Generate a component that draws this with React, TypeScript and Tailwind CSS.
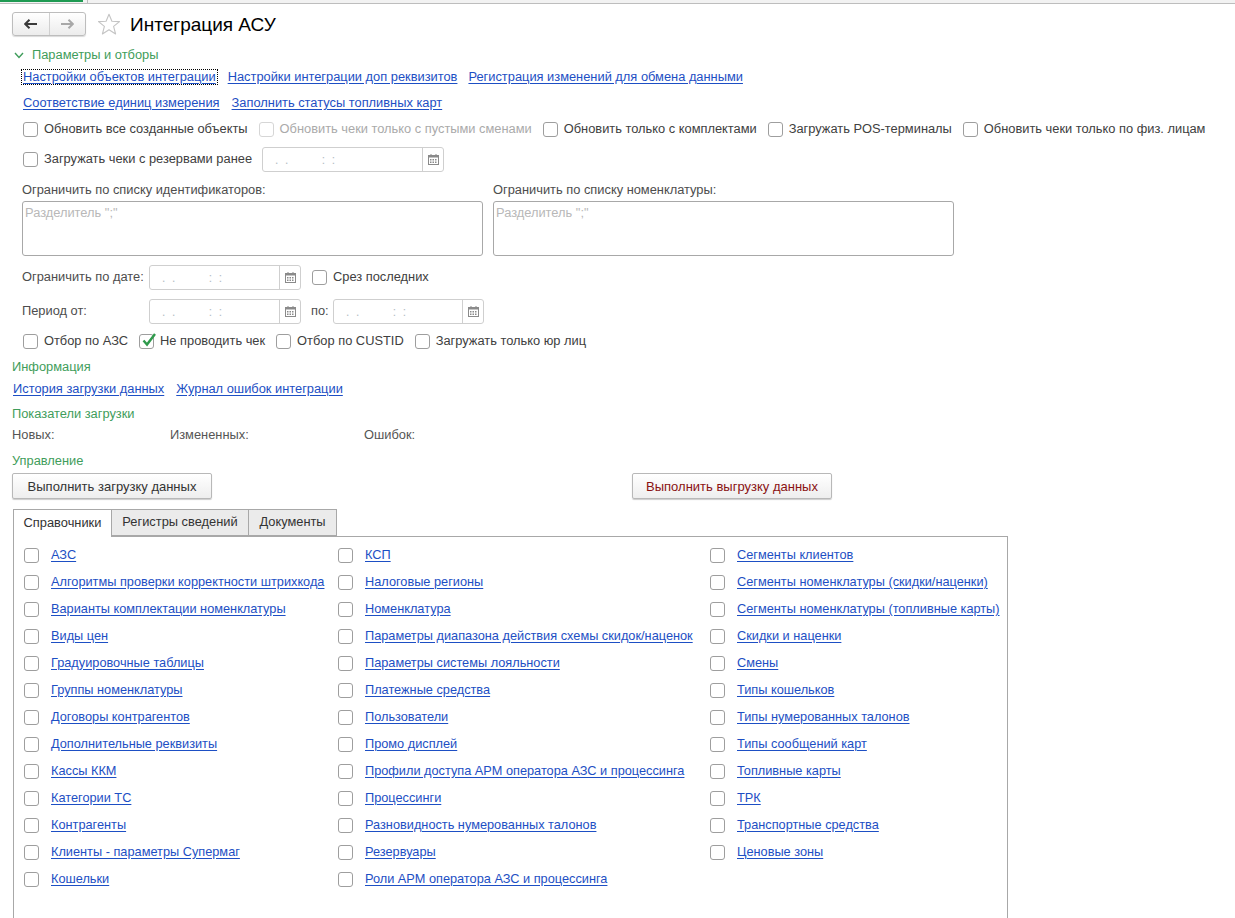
import React from "react";

const green = "text-[#3f9d5b]";
const linkCls = "text-[#1d4fc4] underline underline-offset-2 decoration-[#1d4fc4] whitespace-nowrap";

function Checkbox({ checked, disabled }: { checked?: boolean; disabled?: boolean }) {
  return (
    <span
      className={`relative inline-block w-[15px] h-[15px] shrink-0 rounded-[3px] border bg-white ${
        disabled ? "border-[#d6d6d6]" : "border-[#9e9e9e]"
      }`}
    >
      {checked && (
        <svg className="absolute left-[1px] top-[-3px]" width="16" height="16" viewBox="0 0 16 16">
          <path d="M2.5 8.5 L6 12.5 L14 2" fill="none" stroke="#2f9a4c" strokeWidth="2.4" />
        </svg>
      )}
    </span>
  );
}

function CheckItem({ label, checked, disabled }: { label: string; checked?: boolean; disabled?: boolean }) {
  return (
    <label className="flex items-center gap-[6px] whitespace-nowrap">
      <Checkbox checked={checked} disabled={disabled} />
      <span className={disabled ? "text-[#aaaaaa]" : "text-[#404040]"}>{label}</span>
    </label>
  );
}

function CalendarIcon() {
  return (
    <svg width="11" height="11" viewBox="0 0 11 11">
      <rect x="0.5" y="1.5" width="10" height="9" fill="none" stroke="#8a8a8a" />
      <rect x="0.5" y="1.5" width="10" height="2" fill="#8a8a8a" />
      <rect x="2.5" y="0" width="1" height="2" fill="#8a8a8a" />
      <rect x="7.5" y="0" width="1" height="2" fill="#8a8a8a" />
      {[2, 4.5, 7].map((x) =>
        [5, 7.5].map((y) => <rect key={`${x}-${y}`} x={x} y={y} width="1.5" height="1.5" fill="#8a8a8a" />)
      )}
    </svg>
  );
}

function DateInput({ width }: { width: string }) {
  return (
    <div className={`flex h-[25px] ${width} rounded-[3px] border border-[#cfcfcf] bg-white`}>
      <div className="flex-1 flex items-center pl-[12px] text-[#b5bcc4] text-[12px]">
        <span className="whitespace-pre">.  .          :  :</span>
      </div>
      <div className="w-[21px] border-l border-[#cfcfcf] flex items-center justify-center">
        <CalendarIcon />
      </div>
    </div>
  );
}

function Btn({ children, red }: { children: React.ReactNode; red?: boolean }) {
  return (
    <button
      className={`h-[26px] w-[200px] rounded-[2px] border border-[#b8b8b8] bg-gradient-to-b from-white to-[#eeeeee] shadow-[0_1px_1px_rgba(0,0,0,0.2)] text-[13px] ${
        red ? "text-[#8a1212]" : "text-[#333333]"
      }`}
    >
      {children}
    </button>
  );
}

const col1 = [
  "АЗС",
  "Алгоритмы проверки корректности штрихкода",
  "Варианты комплектации номенклатуры",
  "Виды цен",
  "Градуировочные таблицы",
  "Группы номенклатуры",
  "Договоры контрагентов",
  "Дополнительные реквизиты",
  "Кассы ККМ",
  "Категории ТС",
  "Контрагенты",
  "Клиенты - параметры Супермаг",
  "Кошельки",
];
const col2 = [
  "КСП",
  "Налоговые регионы",
  "Номенклатура",
  "Параметры диапазона действия схемы скидок/наценок",
  "Параметры системы лояльности",
  "Платежные средства",
  "Пользователи",
  "Промо дисплей",
  "Профили доступа АРМ оператора АЗС и процессинга",
  "Процессинги",
  "Разновидность нумерованных талонов",
  "Резервуары",
  "Роли АРМ оператора АЗС и процессинга",
];
const col3 = [
  "Сегменты клиентов",
  "Сегменты номенклатуры (скидки/наценки)",
  "Сегменты номенклатуры (топливные карты)",
  "Скидки и наценки",
  "Смены",
  "Типы кошельков",
  "Типы нумерованных талонов",
  "Типы сообщений карт",
  "Топливные карты",
  "ТРК",
  "Транспортные средства",
  "Ценовые зоны",
];

function ListColumn({ items }: { items: string[] }) {
  return (
    <div className="flex flex-col gap-[11px]">
      {items.map((it) => (
        <div key={it} className="flex items-center h-[16px] gap-[12px]">
          <Checkbox />
          <a className={linkCls}>{it}</a>
        </div>
      ))}
    </div>
  );
}

export default function App() {
  return (
    <div
      className="h-[918px] w-[1235px] overflow-hidden bg-white text-[12.85px] text-[#404040] leading-none"
      style={{ fontFamily: '"Liberation Sans", Arial, sans-serif' }}
    >
      {/* top strip */}
      <div className="relative h-[4px] bg-[#f2f2f2] border-b border-[#bdbdbd]">
        <div className="absolute left-0 top-0 h-[2px] w-[83px] bg-[#1e9a52]" />
        <div className="absolute left-[87px] top-0 h-[3px] w-px bg-[#bdbdbd]" />
      </div>

      {/* header */}
      <div className="mt-[8px] ml-[12px] flex items-center h-[24px]">
        <div className="flex h-[24px] w-[74px] rounded-[3px] border border-[#bdbdbd] bg-gradient-to-b from-white to-[#ececec] shadow-[0_1px_1px_rgba(0,0,0,0.15)]">
          <div className="flex-1 flex items-center justify-center border-r border-[#d0d0d0]">
            <svg width="14" height="10" viewBox="0 0 14 10">
              <path d="M1 5 H13 M5.5 0.8 L1.2 5 L5.5 9.2" fill="none" stroke="#3a3a3a" strokeWidth="2" />
            </svg>
          </div>
          <div className="flex-1 flex items-center justify-center">
            <svg width="14" height="10" viewBox="0 0 14 10">
              <path d="M1 5 H13 M8.5 0.8 L12.8 5 L8.5 9.2" fill="none" stroke="#a8a8a8" strokeWidth="2" />
            </svg>
          </div>
        </div>
        <svg className="ml-[11px]" width="24" height="23" viewBox="0 0 24 23">
          <path
            d="M12 1.2 L14.9 8.3 L22.5 8.6 L16.6 13.4 L18.6 21 L12 16.8 L5.4 21 L7.4 13.4 L1.5 8.6 L9.1 8.3 Z"
            fill="none"
            stroke="#c4c4c4"
            strokeWidth="1.1"
            strokeLinejoin="round"
          />
        </svg>
        <span className="ml-[9px] text-[19px] text-black whitespace-nowrap">Интеграция АСУ</span>
      </div>

      {/* Параметры и отборы */}
      <div className={`mt-[11px] ml-[14px] h-[16px] flex items-center gap-[8px] ${green}`}>
        <svg width="10" height="7" viewBox="0 0 10 7">
          <path d="M1 1 L5 5.5 L9 1" fill="none" stroke="#3f9d5b" strokeWidth="1.4" />
        </svg>
        <span>Параметры и отборы</span>
      </div>

      <div className="mt-[6px] ml-[22px] h-[16px] flex items-center gap-[11px]">
        <span className="outline-1 outline-dotted outline-black px-[1px] py-[1px]">
          <a className={linkCls}>Настройки объектов интеграции</a>
        </span>
        <a className={linkCls}>Настройки интеграции доп реквизитов</a>
        <a className={linkCls}>Регистрация изменений для обмена данными</a>
      </div>

      <div className="mt-[10px] ml-[23px] h-[16px] flex items-center gap-[12px]">
        <a className={linkCls}>Соответствие единиц измерения</a>
        <a className={linkCls}>Заполнить статусы топливных карт</a>
      </div>

      <div className="mt-[10px] ml-[23px] h-[16px] flex items-center gap-[11px]">
        <CheckItem label="Обновить все созданные объекты" />
        <CheckItem label="Обновить чеки только с пустыми сменами" disabled />
        <CheckItem label="Обновить только с комплектами" />
        <CheckItem label="Загружать POS-терминалы" />
        <CheckItem label="Обновить чеки только по физ. лицам" />
      </div>

      <div className="mt-[10px] ml-[23px] h-[25px] flex items-center gap-[10px]">
        <CheckItem label="Загружать чеки с резервами ранее" />
        <DateInput width="w-[182px]" />
      </div>

      <div className="mt-[10px] ml-[22px] flex gap-[10px]">
        <div className="w-[461px]">
          <div className="h-[16px] flex items-center text-[#4d4d4d]">Ограничить по списку идентификаторов:</div>
          <div className="mt-[3px] h-[55px] rounded-[3px] border border-[#a8a8a8] px-[2px] pt-[5px] text-[#b8b8b8]">
            Разделитель ";"
          </div>
        </div>
        <div className="w-[461px]">
          <div className="h-[16px] flex items-center text-[#4d4d4d]">Ограничить по списку номенклатуры:</div>
          <div className="mt-[3px] h-[55px] rounded-[3px] border border-[#a8a8a8] px-[2px] pt-[5px] text-[#b8b8b8]">
            Разделитель ";"
          </div>
        </div>
      </div>

      <div className="mt-[9px] ml-[22px] h-[25px] flex items-center">
        <span className="w-[127px] text-[#4d4d4d]">Ограничить по дате:</span>
        <DateInput width="w-[152px]" />
        <span className="ml-[11px]">
          <CheckItem label="Срез последних" />
        </span>
      </div>

      <div className="mt-[9px] ml-[22px] h-[25px] flex items-center">
        <span className="w-[127px] text-[#4d4d4d]">Период от:</span>
        <DateInput width="w-[152px]" />
        <span className="ml-[10px] w-[22px] text-[#4d4d4d]">по:</span>
        <DateInput width="w-[151px]" />
      </div>

      <div className="mt-[9px] ml-[23px] h-[16px] flex items-center gap-[11px]">
        <CheckItem label="Отбор по АЗС" />
        <CheckItem label="Не проводить чек" checked />
        <CheckItem label="Отбор по CUSTID" />
        <CheckItem label="Загружать только юр лиц" />
      </div>

      <div className={`mt-[10px] ml-[12px] h-[16px] flex items-center ${green}`}>Информация</div>
      <div className="mt-[6px] ml-[13px] h-[16px] flex items-center gap-[12px]">
        <a className={linkCls}>История загрузки данных</a>
        <a className={linkCls}>Журнал ошибок интеграции</a>
      </div>

      <div className={`mt-[9px] ml-[12px] h-[16px] flex items-center ${green}`}>Показатели загрузки</div>
      <div className="mt-[5px] ml-[12px] h-[16px] flex items-center text-[#555555]">
        <span className="w-[158px]">Новых:</span>
        <span className="w-[194px]">Измененных:</span>
        <span>Ошибок:</span>
      </div>

      <div className={`mt-[10px] ml-[12px] h-[16px] flex items-center ${green}`}>Управление</div>
      <div className="mt-[4px] ml-[12px] flex items-center gap-[420px]">
        <Btn>Выполнить загрузку данных</Btn>
        <Btn red>Выполнить выгрузку данных</Btn>
      </div>

      {/* tabs */}
      <div className="mt-[10px] ml-[13px] flex h-[27px] items-end">
        <div className="relative z-10 h-[28px] w-[99px] -mb-px flex items-center justify-center border border-b-0 border-[#a8a8a8] bg-white text-[#333333]">
          Справочники
        </div>
        <div className="h-[27px] w-[138px] -ml-px flex items-center justify-center border border-[#a8a8a8] bg-[#ebebeb] text-[#333333]">
          Регистры сведений
        </div>
        <div className="h-[27px] w-[89px] -ml-px flex items-center justify-center border border-[#a8a8a8] bg-[#ebebeb] text-[#333333]">
          Документы
        </div>
      </div>
      <div className="ml-[13px] w-[995px] h-[400px] border border-[#a8a8a8] pl-[10px] pt-[10px] text-[12.75px] grid grid-cols-[314px_372px_1fr]">
        <ListColumn items={col1} />
        <ListColumn items={col2} />
        <ListColumn items={col3} />
      </div>
    </div>
  );
}
